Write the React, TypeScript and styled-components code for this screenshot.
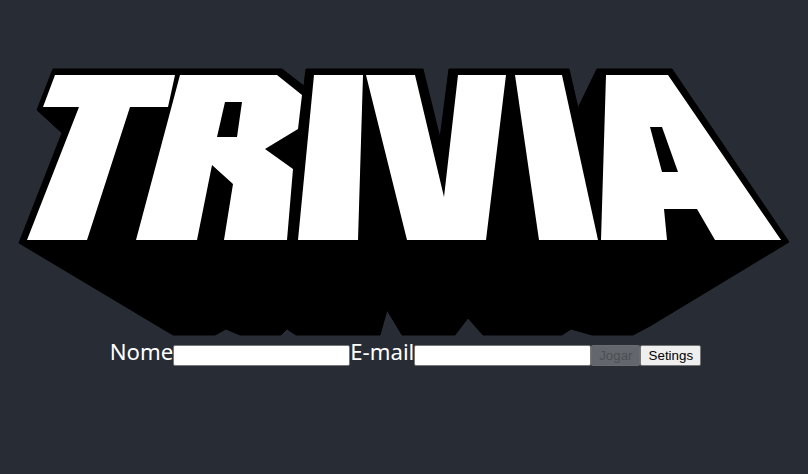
import React from "react";
import styled, { createGlobalStyle } from "styled-components";

const Global = createGlobalStyle`
  html, body { margin: 0; padding: 0; background: #282c34; }
`;

const Page = styled.main`
  width: 808px;
  height: 474px;
  background: #282c34;
  overflow: hidden;
`;

const Logo = styled.svg`
  display: block;
  width: 808px;
  height: 345px;
`;

const Form = styled.form`
  display: flex;
  justify-content: center;
  align-items: center;
  height: 21px;
  padding-left: 3px;
`;

const Label = styled.label`
  display: flex;
  align-items: center;
`;

const Caption = styled.span`
  margin-bottom: 8px;
  color: #fff;
  font-family: "Noto Sans", sans-serif;
  font-size: 22.2px;
  line-height: 21px;
`;

const Field = styled.input`
  box-sizing: border-box;
  width: 177px;
  height: 21px;
  margin: 0;
  padding: 1px 2px;
  background: #fff;
  border: 1px solid #767676;
  border-radius: 2px;
`;

const Action = styled.button<{ $width: number }>`
  box-sizing: border-box;
  width: ${(p) => p.$width}px;
  height: 21px;
  margin: 0;
  padding: 1px 0;
  font-family: "Liberation Sans", Arial, sans-serif;
  font-size: 13.33px;
  color: #000;
  background: #efefef;
  border: 1px solid #767676;
  border-radius: 2px;
  &:disabled {
    color: rgba(16, 16, 16, 0.3);
    background: rgba(239, 239, 239, 0.3);
    border-color: rgba(118, 118, 118, 0.3);
  }
`;

const silhouette =
  "53,69 282,69 304,86 306,69 423,69 440,138 449,69 569,69 578,108 597,69 672,69 789,242 650,326 633,335 592,335 571,329 562,335 483,335 468,318 455,335 402,335 387,310 380,335 296,335 287,329 281,335 240,335 226,329 215,335 173,335 19,243 62,133 37,110";

const letters = [
  "55,75 175,75 168,107 130,107 87,240 27,240 79,107 43,107",
  "180,75 277,75 302,95 298,129 265,149 293,169 287,240 224,240 233,184 212,165 197,240 136,240",
  "314,75 363,75 358,240 298,240",
  "366,75 415,75 444,197 458,75 506,75 486,240 407,240",
  "515,75 562,75 598,240 539,240",
  "606,75 668,75 781,240 715,240 697,209 664,209 667,240 601,240",
];

const holes = [
  "225,102 242,102 237,137 217,137",
  "650,127 662,127 678,172 662,172",
];

export default function App() {
  return (
    <Page>
      <Global />
      <Logo viewBox="0 0 808 345" role="img" aria-label="Trivia">
        <polygon points={silhouette} fill="#000" stroke="#000" strokeWidth="1" strokeLinejoin="round" />
        {letters.map((p) => (
          <polygon key={p} points={p} fill="#fff" />
        ))}
        {holes.map((p) => (
          <polygon key={p} points={p} fill="#000" />
        ))}
      </Logo>
      <Form>
        <Label>
          <Caption>Nome</Caption>
          <Field type="text" />
        </Label>
        <Label>
          <Caption>E-mail</Caption>
          <Field type="email" />
        </Label>
        <Action $width={49} type="button" disabled>Jogar</Action>
        <Action $width={61} type="button">Setings</Action>
      </Form>
    </Page>
  );
}
